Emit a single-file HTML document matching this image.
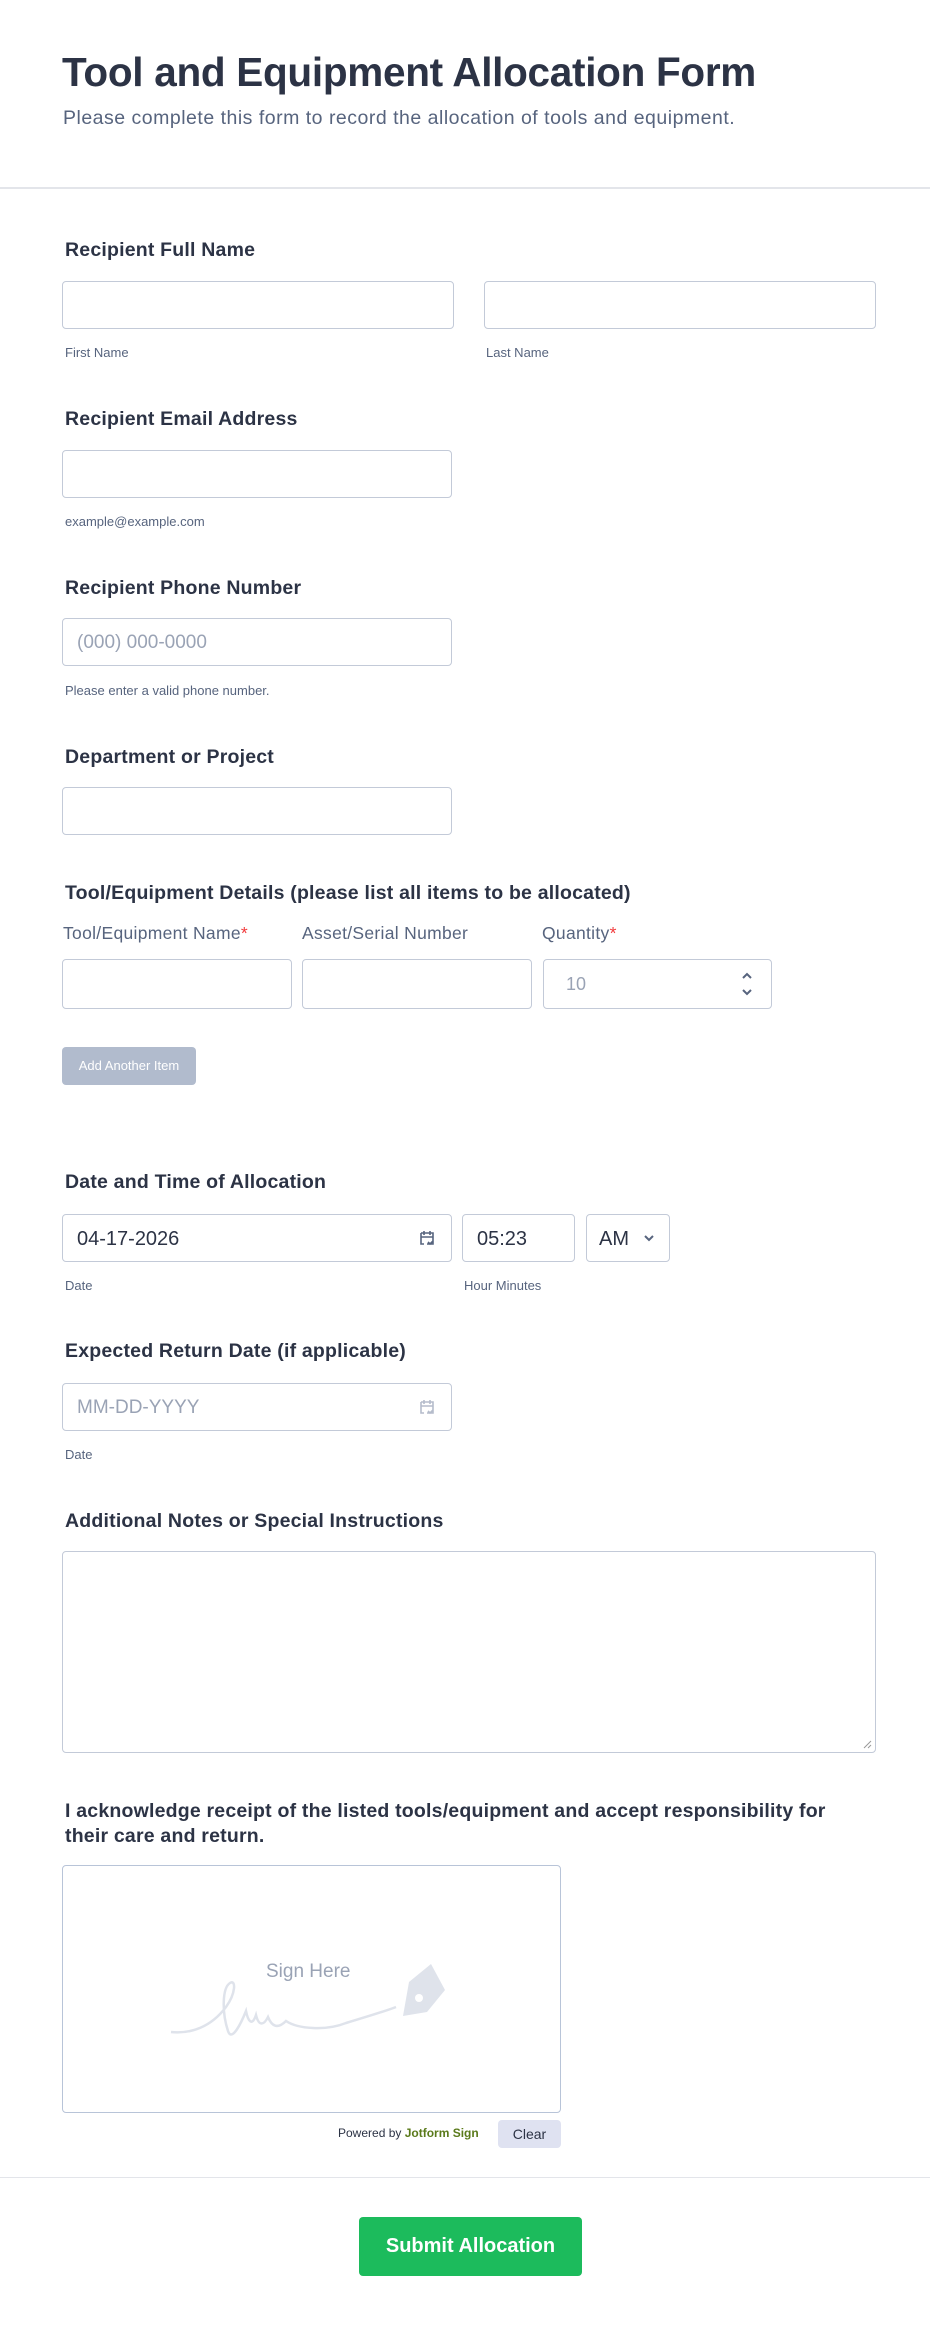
<!DOCTYPE html>
<html><head><meta charset="utf-8"><style>
*{box-sizing:border-box;margin:0;padding:0}
body{width:930px;height:2325px;background:#fff;font-family:"Liberation Sans",sans-serif;color:#2c3345;position:relative;overflow:hidden}
.a{position:absolute}
.lbl{position:absolute;left:65px;font-size:19.5px;font-weight:bold;color:#2c3345;letter-spacing:0.2px}
.sub{position:absolute;font-size:13px;color:#57647e}
.in{position:absolute;border:1px solid #c3cad8;border-radius:4px;background:#fff;height:48px}
.ph{position:absolute;font-size:19px;color:#9aa3b5;top:13px;left:14px}
.val{position:absolute;font-size:20px;color:#2c3345;top:13px;left:14px}
.req{color:#f23a3c}
.col{position:absolute;top:923px;font-size:17.5px;color:#57647e;letter-spacing:0.3px}
</style></head><body>
<div class="a" style="left:62px;top:49px;font-size:40.5px;font-weight:bold;color:#2c3345;letter-spacing:-0.3px">Tool and Equipment Allocation Form</div>
<div class="a" style="left:63px;top:107px;font-size:19.5px;color:#57647e;letter-spacing:0.5px">Please complete this form to record the allocation of tools and equipment.</div>
<div class="a" style="left:0;top:187px;width:930px;height:2px;background:#e3e5ea"></div>

<div class="lbl" style="top:239px">Recipient Full Name</div>
<div class="in" style="left:62px;top:281px;width:392px"></div>
<div class="in" style="left:484px;top:281px;width:392px"></div>
<div class="sub" style="left:65px;top:345px">First Name</div>
<div class="sub" style="left:486px;top:345px">Last Name</div>

<div class="lbl" style="top:408px">Recipient Email Address</div>
<div class="in" style="left:62px;top:450px;width:390px"></div>
<div class="sub" style="left:65px;top:514px">example@example.com</div>

<div class="lbl" style="top:577px">Recipient Phone Number</div>
<div class="in" style="left:62px;top:618px;width:390px"><span class="ph">(000) 000-0000</span></div>
<div class="sub" style="left:65px;top:683px">Please enter a valid phone number.</div>

<div class="lbl" style="top:746px">Department or Project</div>
<div class="in" style="left:62px;top:787px;width:390px"></div>

<div class="lbl" style="top:882px">Tool/Equipment Details (please list all items to be allocated)</div>
<div class="col" style="left:63px">Tool/Equipment Name<span class="req">*</span></div>
<div class="col" style="left:302px">Asset/Serial Number</div>
<div class="col" style="left:542px">Quantity<span class="req">*</span></div>
<div class="in" style="left:62px;top:959px;width:230px;height:50px"></div>
<div class="in" style="left:302px;top:959px;width:230px;height:50px"></div>
<div class="in" style="left:543px;top:959px;width:229px;height:50px"><span class="ph" style="left:22px;top:14px;font-size:18px">10</span>
<svg class="a" style="left:196px;top:10px" width="14" height="28" viewBox="0 0 14 28"><path d="M3 8l4-4 4 4M3 20l4 4 4-4" stroke="#57647e" stroke-width="2" fill="none"/></svg></div>
<div class="a" style="left:62px;top:1047px;width:134px;height:38px;background:#b1bbcd;border-radius:4px;color:#fff;font-size:13px;line-height:38px;text-align:center">Add Another Item</div>

<div class="lbl" style="top:1171px">Date and Time of Allocation</div>
<div class="in" style="left:62px;top:1214px;width:390px"><span class="val">04-17-2026</span>
<svg class="a" style="left:355px;top:14px" width="18" height="18" viewBox="0 0 18 18"><path d="M3 4h12v11H9M3 4v11h3M3 8h12M6 2v4M12 2v4M10 13l2 2 3-3" stroke="#57647e" stroke-width="1.6" fill="none"/></svg></div>
<div class="in" style="left:462px;top:1214px;width:113px"><span class="val">05:23</span></div>
<div class="in" style="left:586px;top:1214px;width:84px"><span class="val" style="left:12px">AM</span>
<svg class="a" style="left:56px;top:18px" width="12" height="10" viewBox="0 0 12 10"><path d="M2 3l4 4 4-4" stroke="#57647e" stroke-width="2" fill="none"/></svg></div>
<div class="sub" style="left:65px;top:1278px">Date</div>
<div class="sub" style="left:464px;top:1278px">Hour Minutes</div>

<div class="lbl" style="top:1340px">Expected Return Date (if applicable)</div>
<div class="in" style="left:62px;top:1383px;width:390px"><span class="ph">MM-DD-YYYY</span>
<svg class="a" style="left:355px;top:14px" width="18" height="18" viewBox="0 0 18 18"><path d="M3 4h12v11H9M3 4v11h3M3 8h12M6 2v4M12 2v4M10 13l2 2 3-3" stroke="#b5bccb" stroke-width="1.6" fill="none"/></svg></div>
<div class="sub" style="left:65px;top:1447px">Date</div>

<div class="lbl" style="top:1510px">Additional Notes or Special Instructions</div>
<div class="in" style="left:62px;top:1551px;width:814px;height:202px">
<svg class="a" style="right:3px;bottom:3px" width="9" height="9"><path d="M1 8L8 1M5 8L8 5" stroke="#999" stroke-width="1"/></svg></div>

<div class="lbl" style="top:1799px;line-height:25px;width:790px">I acknowledge receipt of the listed tools/equipment and accept responsibility for their care and return.</div>
<div class="in" style="left:62px;top:1865px;width:499px;height:248px;border-color:#b8c4d8">
<svg class="a" style="left:100px;top:62px" width="300" height="110" viewBox="0 0 300 110"><path d="M8 104c20 2 40-5 55-25 10-14 10-28 4-24-8 5-8 30-2 48 4 12 14-10 18-20 2 10 6 16 10 4 3 12 8 10 12 2 4 10 10 12 18 4 12 8 40 10 60 2 20-6 40-12 50-16" stroke="#dfe3eb" stroke-width="2.5" fill="none"/><path d="M240 88l6-34 22-18 14 26-18 22z" fill="#dfe3eb"/><circle cx="256" cy="70" r="4" fill="#fff"/></svg>
<div class="a" style="left:203px;top:95px;font-size:19px;color:#9aa3b5">Sign Here</div></div>
<div class="a" style="left:338px;top:2126px;font-size:12px;color:#2c3345">Powered by <b style="color:#5a7a1a">Jotform Sign</b></div>
<div class="a" style="left:498px;top:2120px;width:63px;height:28px;background:#dfe2f1;border-radius:4px;font-size:14px;line-height:28px;text-align:center;color:#2c3345">Clear</div>

<div class="a" style="left:0;top:2177px;width:930px;height:1px;background:#e3e5ea"></div>
<div class="a" style="left:359px;top:2217px;width:223px;height:59px;background:#1cbb5c;border-radius:4px;color:#fff;font-size:20px;font-weight:bold;line-height:59px;text-align:center">Submit Allocation</div>
</body></html>
